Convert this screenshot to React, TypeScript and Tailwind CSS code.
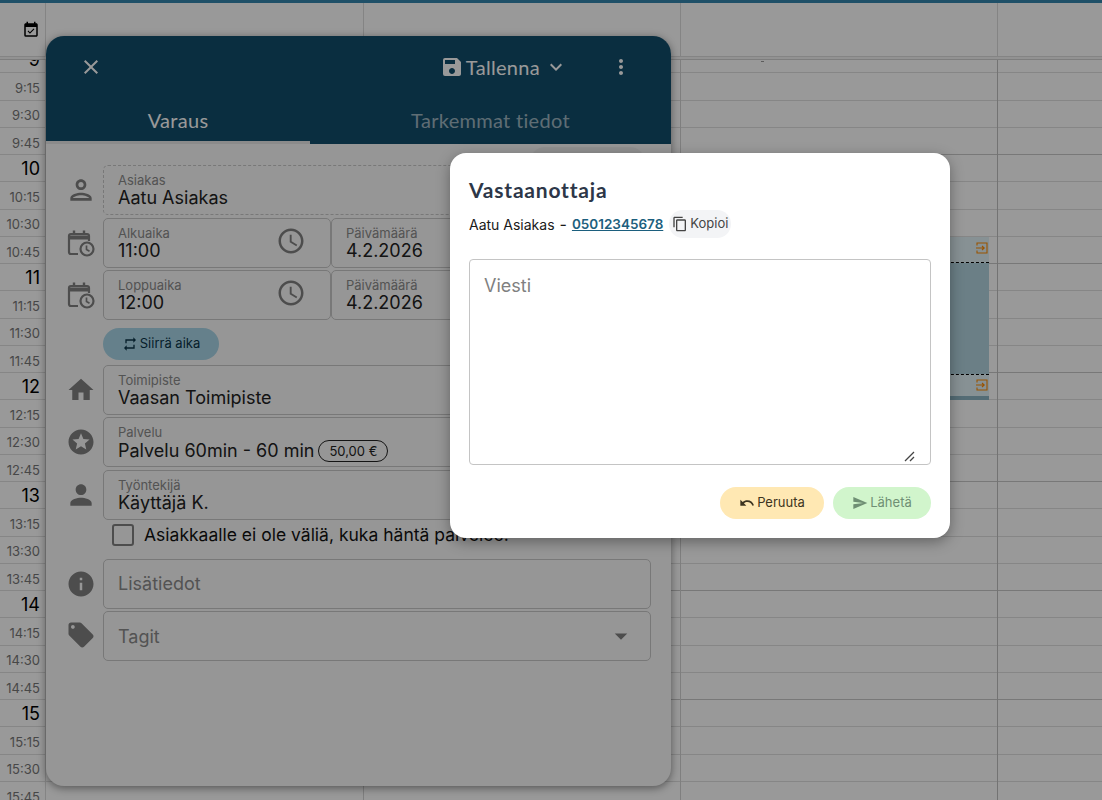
import type { ReactNode } from 'react'
import {
  MdAccessTime,
  MdArrowDropDown,
  MdClose,
  MdContentCopy,
  MdEventAvailable,
  MdExpandMore,
  MdHome,
  MdInfo,
  MdLocalOffer,
  MdMoreVert,
  MdOutlinePerson,
  MdPerson,
  MdRepeat,
  MdSave,
  MdSend,
  MdStars,
  MdUndo,
} from 'react-icons/md'

const rows = [
  '9', '9:15', '9:30', '9:45', '10', '10:15', '10:30', '10:45', '11', '11:15', '11:30', '11:45', '12', '12:15',
  '12:30', '12:45', '13', '13:15', '13:30', '13:45', '14', '14:15', '14:30', '14:45', '15', '15:15', '15:30', '15:45',
]

const heading = { fontFamily: 'Lato, Inter, sans-serif' }

function CalendarClock() {
  return (
    <svg width="30" height="30" viewBox="0 0 30 30" fill="none" className="text-[#808080]">
      <path d="M3 7.500H23V11.500H3Z" fill="currentColor" />
      <path d="M12 26H5A2 2 0 0 1 3 24V8A2 2 0 0 1 5 6H21A2 2 0 0 1 23 8V13" stroke="currentColor" strokeWidth="2.200" />
      <path d="M8 2.500V7M18 2.500V7" stroke="currentColor" strokeWidth="2.400" />
      <circle cx="21" cy="21" r="6.500" fill="#fafafa" stroke="currentColor" strokeWidth="2.200" />
      <path d="M20.500 17.500V21.500L23.500 23.200" stroke="currentColor" strokeWidth="1.700" />
    </svg>
  )
}

function CheckInIcon() {
  return (
    <svg width="12" height="12" viewBox="0 0 12 12" fill="none" stroke="#ff8a00" strokeWidth="1.100">
      <path d="M1 3.500V1H11V11H1V8.500" />
      <path d="M0 6H8M6 4 8.200 6 6 8" />
    </svg>
  )
}

function Field({ label, value, dashed, className, children }: { label: string; value: ReactNode; dashed?: boolean; className?: string; children?: ReactNode }) {
  return (
    <div
      className={`relative h-[50px] rounded-[5px] border border-[#c8c8c8] px-[14px] pt-[7px] ${dashed ? 'border-dashed' : ''} ${className ?? ''}`}
    >
      <div className="text-[13px] leading-[15px] text-[#8a8a8a]">{label}</div>
      <div className="flex items-center text-[18px] leading-[20px] text-[#222]">{value}</div>
      {children}
    </div>
  )
}

function Row({ icon, children, className }: { icon: ReactNode; children: ReactNode; className?: string }) {
  return (
    <div className={`flex ${className ?? ''}`}>
      <div className="flex w-[57px] shrink-0 items-center justify-center pl-[12px] text-[#808080]">{icon}</div>
      <div className="flex-1">{children}</div>
    </div>
  )
}

function Calendar() {
  return (
    <div className="flex h-[800px] flex-col overflow-hidden bg-white">
      <div className="h-[3px] bg-[#3485ae]" />
      <div className="flex h-[54px] border-b border-[#dcdcdc]">
        <div className="flex w-[46px] items-center justify-end border-r border-[#dcdcdc] pr-[5px]">
          <MdEventAvailable size={18} className="text-black" />
        </div>
        <div className="w-[318px] border-r border-[#dcdcdc]" />
        <div className="w-[317px] border-r border-[#dcdcdc]" />
        <div className="w-[317px] border-r border-[#dcdcdc]" />
        <div className="flex-1" />
      </div>
      <div className="h-[3px] border-b border-[#d0d0d0] bg-[#f4f4f4]" />
      <div className="relative flex-1 overflow-hidden">
        <div className="absolute left-[761px] top-[1px] h-[1px] w-[3px] bg-[#999]" />
        <div className="-mt-[14px] flex">
          <div className="w-[46px] shrink-0 border-r border-[#dcdcdc]">
            {rows.map((r) => (
              <div
                key={r}
                className={`flex h-[27.25px] items-center justify-end border-b border-[#dfdfdf] pr-[5px] ${
                  r.includes(':') ? 'pt-[5px] text-[13px] text-[#777]' : 'text-[18px] text-black'
                }`}
              >
                {r}
              </div>
            ))}
          </div>
          <div className="flex-1">
            {rows.map((r, i) => (
              <div key={r} className={`h-[27.25px] border-b ${(i + 1) % 4 === 0 ? 'border-[#c8c8c8]' : 'border-[#dfdfdf]'}`} />
            ))}
          </div>
        </div>
        <div className="pointer-events-none absolute inset-y-0 left-[363px] w-px bg-[#d4d4d4]" />
        <div className="pointer-events-none absolute inset-y-0 left-[680px] w-px bg-[#d4d4d4]" />
        <div className="pointer-events-none absolute inset-y-0 left-[997px] w-px bg-[#c0c0c0]" />

        <div className="absolute left-[690px] top-[177px] flex h-[163px] w-[299px] flex-col bg-[#e2f2f7]">
          <div className="flex h-[26px] justify-end border-b border-dashed border-black pr-[1px] pt-[5px]">
            <CheckInIcon />
          </div>
          <div className="h-[111px] bg-[#b2d4df]" />
          <div className="flex flex-1 justify-end border-t border-dashed border-black pr-[1px] pt-[4px]">
            <CheckInIcon />
          </div>
          <div className="h-[4px] bg-[#8db5c4]" />
        </div>
      </div>
    </div>
  )
}

function BookingPanel() {
  return (
    <div className="absolute left-[46px] top-[36px] h-[750px] w-[625px] rounded-[18px] bg-[#fafafa] shadow-[0_2px_8px_rgba(0,0,0,0.45)]">
      <div className="h-[108px] rounded-t-[18px] bg-[#114d6b] text-white">
        <div className="flex h-[62px] items-center pl-[33px] pr-[38px]">
          <MdClose size={24} />
          <div className="ml-auto flex items-center text-[20px] tracking-[0.3px]" style={heading}>
            <MdSave size={24} />
            <span className="ml-[2px]">Tallenna</span>
            <MdExpandMore size={24} className="ml-[4px]" />
          </div>
          <MdMoreVert size={24} className="ml-[41px]" />
        </div>
        <div className="flex h-[46px] text-[20px] tracking-[0.3px]" style={heading}>
          <div className="flex w-[264px] items-center justify-center border-b-[3px] border-[#e8e8e8]">Varaus</div>
          <div className="flex flex-1 items-center justify-center pb-[3px] text-white/60">Tarkemmat tiedot</div>
        </div>
      </div>
      <div className="absolute left-[484px] top-[111px] h-[30px] w-[115px] rounded-full bg-[#f0f0f0]" />

      <div className="flex flex-col pr-[20px] pt-[21px]">
        <Row icon={<MdOutlinePerson size={32} />}>
          <Field label="Asiakas" value="Aatu Asiakas" dashed />
        </Row>
        <Row icon={<CalendarClock />} className="mt-[3px]">
          <div className="flex">
            <Field label="Alkuaika" value="11:00" className="w-[228px]">
              <MdAccessTime size={30} className="absolute right-[24px] top-[7px] text-[#808080]" />
            </Field>
            <Field label="Päivämäärä" value="4.2.2026" className="flex-1" />
          </div>
        </Row>
        <Row icon={<CalendarClock />} className="mt-[2px]">
          <div className="flex">
            <Field label="Loppuaika" value="12:00" className="w-[228px]">
              <MdAccessTime size={30} className="absolute right-[24px] top-[7px] text-[#808080]" />
            </Field>
            <Field label="Päivämäärä" value="4.2.2026" className="flex-1" />
          </div>
        </Row>
        <div className="ml-[57px] mt-[8px] flex h-[32px] w-[116px] items-center justify-center gap-[2px] rounded-full bg-[#a9d6e8] text-[13px] text-[#0b3548]">
          <MdRepeat size={16} />
          Siirrä aika
        </div>
        <Row icon={<MdHome size={30} />} className="mt-[5px]">
          <Field label="Toimipiste" value="Vaasan Toimipiste" />
        </Row>
        <Row icon={<MdStars size={30} />} className="mt-[2px]">
          <Field
            label="Palvelu"
            value={
              <>
                Palvelu 60min - 60 min
                <span className="ml-[4px] rounded-full border border-[#222] px-[10px] text-[13px] leading-[20px]">50,00 €</span>
              </>
            }
          />
        </Row>
        <Row icon={<MdPerson size={32} />} className="mt-[3px]">
          <Field label="Työntekijä" value="Käyttäjä K." />
        </Row>
        <div className="ml-[66px] mt-[3px] flex h-[24px] items-center gap-[10px] text-[17.5px] text-[#111]">
          <div className="h-[22px] w-[22px] rounded-[3px] border-2 border-[#808080]" />
          Asiakkaalle ei ole väliä, kuka häntä palvelee.
        </div>
        <Row icon={<MdInfo size={30} />} className="mt-[12px]">
          <div className="flex h-[50px] items-center rounded-[5px] border border-[#c8c8c8] px-[14px] pb-[2px] text-[18px] text-[#8a8a8a]">Lisätiedot</div>
        </Row>
        <Row icon={<MdLocalOffer size={30} className="-mt-[3px]" />} className="mt-[2px]">
          <div className="flex h-[50px] items-center justify-between rounded-[5px] border border-[#c8c8c8] pl-[14px] pr-[19px] text-[18px] text-[#8a8a8a]">
            Tagit
            <MdArrowDropDown size={30} className="-mr-[5px] text-[#808080]" />
          </div>
        </Row>
      </div>
    </div>
  )
}

function MessageDialog() {
  return (
    <div className="absolute left-[450px] top-[153px] flex h-[385px] w-[500px] flex-col rounded-[16px] bg-white px-[19px] pt-[25px] shadow-[0_4px_14px_rgba(0,0,0,0.35)]">
      <div className="text-[21px] font-bold leading-[24px] tracking-[0.8px] text-[#2d3748]" style={heading}>
        Vastaanottaja
      </div>
      <div className="mt-[8px] flex h-[28px] items-center text-[14px] text-[#1a1a1a]">
        Aatu Asiakas
        <span className="mx-[5px] text-[16px]">-</span>
        <span className="text-[13.5px] font-semibold text-[#1c5f7e] underline">05012345678</span>
        <span className="ml-[6px] flex h-[28px] items-center gap-[2px] rounded-full bg-[#f3f4f6] pl-[3px] pr-[3px] text-[13px] text-[#444]">
          <MdContentCopy size={16} />
          Kopioi
        </span>
      </div>
      <div className="relative mt-[21px] h-[206px] rounded-[4px] border border-[#c4c4c4] px-[14px] py-[15px] text-[18px] leading-[22px] text-[#808080]">
        Viesti
        <svg width="11" height="11" viewBox="0 0 11 11" className="absolute bottom-[2px] right-[15px]" stroke="#444" strokeWidth="1.300">
          <path d="M1 10 10 1M6 10 10 6" />
        </svg>
      </div>
      <div className="mt-[22px] flex justify-end gap-[9px] text-[13px]">
        <div className="flex h-[32px] w-[104px] items-center justify-center gap-[2px] rounded-full bg-[#ffe8b3] text-[#3d3420]">
          <MdUndo size={16} />
          Peruuta
        </div>
        <div className="flex h-[32px] w-[98px] items-center justify-center gap-[2px] rounded-full bg-[#d1f5cc] text-[#6f8f74]">
          <MdSend size={16} />
          Lähetä
        </div>
      </div>
    </div>
  )
}

export default function App() {
  return (
    <div className="relative h-[800px] w-[1102px] overflow-hidden" style={{ fontFamily: 'Inter, sans-serif' }}>
      <Calendar />
      <BookingPanel />
      <div className="absolute inset-0 bg-black/40" />
      <MessageDialog />
    </div>
  )
}
